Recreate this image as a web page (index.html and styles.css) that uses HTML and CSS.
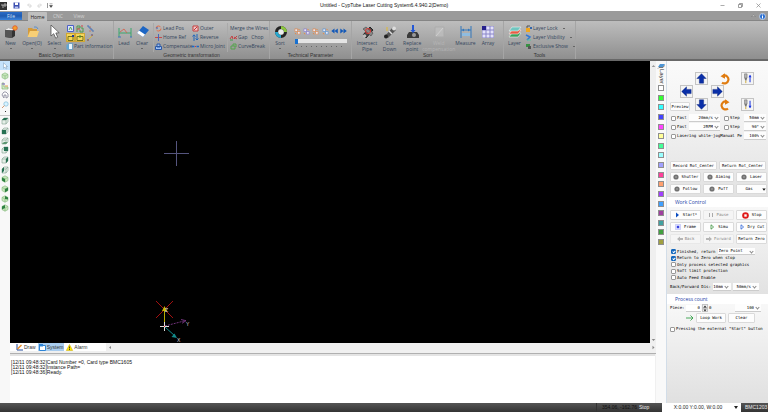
FILE: index.html
```html
<!DOCTYPE html>
<html lang="en">
<head>
<meta charset="utf-8">
<title>Untitled - CypTube Laser Cutting System6.4.940.2(Demo)</title>
<link rel="stylesheet" href="styles.css">
</head>
<body>
<svg class="defs" aria-hidden="true">
  <symbol id="arrow" viewBox="0 0 13 13"><path d="M6.5 .8 12 6.500H9V12H4V6.500H1z" fill="#0a2fa8" stroke="#061f78" stroke-width=".5"/></symbol>
  <symbol id="turn" viewBox="0 0 12 12"><path d="M3 9.6A4 4 0 1 0 4.300 2.600" fill="none" stroke="#e07c10" stroke-width="2.200"/><path d="M1.500 3.200 6 .2V5.800z" fill="#e07c10"/></symbol>
  <symbol id="head" viewBox="0 0 13 13"><path d="M3 1h3v5H3z" fill="#b5b5b5" stroke="#666" stroke-width=".6"/><path d="M3 6h3L5.300 9H3.700z" fill="#777"/><path d="M4.500 9v3" stroke="#c8a020"/><path d="M9.500 3v8" stroke="#1a35e0" stroke-width="1.200"/><path d="M7.700 5 9.500 2l1.800 3z" fill="#1a35e0"/></symbol>
  <symbol id="ball" viewBox="0 0 6 6"><circle cx="3" cy="3" r="2.600" fill="#777"/><circle cx="3" cy="3" r="1.300" fill="#aaa" stroke="#555" stroke-width=".5"/></symbol>
  <symbol id="cube" viewBox="0 0 8 8"><path d="M1 3 3 1h4v3.500L5 7H1z" fill="#e5efe8" stroke="#7fa08e" stroke-width=".6"/><path d="M1 3h4v4M5 3l2-2" fill="none" stroke="#7fa08e" stroke-width=".6"/></symbol>
  <symbol id="iso" viewBox="0 0 8 8"><path d="M4 .8 7 2.400v3.200L4 7.200 1 5.600V2.400z" fill="#c9e6bd" stroke="#85b97c" stroke-width=".6"/><path d="M1 2.400 4 4l3-1.600M4 4v3.200" fill="none" stroke="#85b97c" stroke-width=".6"/></symbol>
  <symbol id="dots" viewBox="0 0 8 8"><path d="M1 1h3v3H1zM4 4h3v3H4z" fill="#e8e8f4" stroke="currentColor" stroke-width=".8"/><path d="M5 1l1.500 1.500M1 6l1.500 1" stroke="#f08030"/></symbol>
</svg>
<div class="app">
  <header class="title">
    <div class="quick">
      <svg width="8" height="8"><path d="M0 0h7v8H0z" fill="#333"/><path d="M1 3h2v3M4 2h2v2H4z" stroke="#ddd" stroke-width=".7" fill="none"/></svg>
      <button class="bare" aria-label="Save"><svg width="7" height="7"><path d="M.5.500h6v6h-6z" fill="#3c4fb0"/><path d="M2 .5h3v2.500H2z" fill="#fff"/><path d="M1.800 4.500h3.400v2H1.800z" fill="#b9c3ec"/></svg></button>
      <button class="bare" aria-label="Undo"><svg width="5" height="5"><path d="M1 2h3v2H2M2 .5.500 2 2 3.500" fill="none" stroke="#ccc" stroke-width=".7"/></svg></button>
      <button class="bare" aria-label="Redo"><svg width="5" height="5"><path d="M4 2H1v2h2M3 .5 4.500 2 3 3.500" fill="none" stroke="#ccc" stroke-width=".7"/></svg></button>
      <button class="bare more" aria-label="Customize"><svg width="4" height="5"><path d="M.5.800h3M.5 2.500h3L2 4.500z" fill="#333" stroke="#333" stroke-width=".4"/></svg></button>
    </div>
    <h1>Untitled - CypTube Laser Cutting System6.4.940.2(Demo)</h1>
    <div class="win">
      <button class="bare" aria-label="Minimize"><svg width="5" height="5"><path d="M.5 2.500h4" stroke="#888" stroke-width=".7"/></svg></button>
      <button class="bare" aria-label="Restore"><svg width="5" height="5"><path d="M.5 1.500h3v3h-3zM1.500 1.500v-1h3v3h-1" fill="none" stroke="#777" stroke-width=".7"/></svg></button>
      <button class="bare" aria-label="Close"><svg width="5" height="5"><path d="m.5.500 4 4m0-4-4 4" stroke="#888" stroke-width=".7"/></svg></button>
    </div>
  </header>
  <nav class="tabs">
    <button class="file">File</button><button class="on">Home</button><button>CNC</button><button>View</button>
    <div class="tabend">
      <button class="bare" aria-label="Collapse ribbon"><svg width="5" height="4"><path d="M.5 2.500 2.500 1l2 1.500z" fill="#ddd" stroke="#666" stroke-width=".4"/></svg></button>
      <button class="bare" aria-label="Help"><svg width="7" height="7"><circle cx="3.500" cy="3.500" r="3" fill="#2b6fd0" stroke="#dce8fa" stroke-width=".7"/><path d="M3.500 1.500v1M3.500 3v2.500" stroke="#fff"/></svg></button>
    </div>
  </nav>
  <div class="ribbon">
    <section class="group g1">
      <div class="tools">
        <button class="big drop"><svg width="14" height="14"><path d="m1 5 3-2 7 1v7l-3 2-7-1z" fill="#333"/><path d="m1 5 3-2 7 1-3 1.500z" fill="#eee"/><path d="m1 5 7 .5V13l-7-1z" fill="#555"/><circle cx="11" cy="3" r="2.300" fill="#f3a02c" stroke="#e2562c" stroke-width=".8"/></svg>New</button>
        <button class="big drop"><svg width="14" height="14"><path d="M2 3h4l1 1h4v7H2z" fill="#d49a3a"/><path d="M1.500 12 4 6h9l-2 6z" fill="#f8cf76"/><path d="M8 2q3-1 4 2" fill="none" stroke="#5b8ecb"/></svg>Open(O)</button>
        <button class="big drop"><svg width="14" height="14"><path d="M3 0v11l2.700-2.300 2 4.500 2-1L7.800 8l3.400-.2z" fill="#fff" stroke="#444" stroke-width=".7"/></svg>Select</button>
        <div class="cluster">
          <button class="bare" aria-label="Fit"><svg width="8" height="8"><path d="M.5.500h6v6h-6z" fill="#dfe6fa" stroke="#4b60c8"/><path d="m2 5 1.500-3L5 5" stroke="#53a052" fill="none"/></svg></button>
          <button class="bare" aria-label="Swap"><svg width="8" height="8"><path d="M1 7V1h3v2H2m3 0h2v4H4V5" stroke="#4c9c4c" fill="none"/><path d="M5 1h2M1 4h3" stroke="#d04545"/></svg></button>
          <button class="bare" aria-label="Nodes"><svg width="8" height="8"><path d="M1 1h2v2h2v2h2v2" stroke="#4972b8" fill="none"/><path d="M4 2h1M3 6h2" stroke="#b76"/></svg></button>
          <button class="bare lit" aria-label="Start point"><svg width="8" height="8"><path d="M1 2.500h5v4H1z" fill="none" stroke="#75701a"/><path d="M5 1h2v2H5z" fill="#223a9c"/></svg></button>
          <button class="bare lit" aria-label="Path"><svg width="8" height="8"><path d="M1 2.500h6v4H1z" fill="none" stroke="#75701a"/><path d="M4 1v3" stroke="#3a9838"/></svg></button>
          <button class="bare" aria-label="Line"><svg width="8" height="8"><path d="m1 7 6-6" stroke="#d6b040"/><path d="M1 6h2M5 1h2" stroke="#647"/></svg></button>
          <button class="small info"><svg width="7" height="8"><path d="M.5 1.500h4v5h-4z" fill="#5ea7d8"/><path d="M2.500.500h4v6h-4z" fill="#e9f6ff" stroke="#4e91bd" stroke-width=".7"/></svg>Part information</button>
        </div>
      </div>
      <h2>Basic Operation</h2>
    </section>
    <section class="group g2">
      <div class="tools">
        <button class="big"><svg width="14" height="14"><path d="M1 3v9M13 3v9M1 8h12" stroke="#3ba66c" fill="none"/><path d="m2 7 4-3 3 4" stroke="#d65d46" fill="none" stroke-width=".8"/><path d="M0 12h3M12 12h2" stroke="#4472c0"/></svg>Lead</button>
        <button class="big drop"><svg width="14" height="14"><path d="m7 1 6 4-6 7-6-4z" fill="#1d66c4"/><path d="m1 8 2-2.500 6 4L7 12z" fill="#fff"/></svg>Clear</button>
        <div class="list line">
          <button class="small"><svg width="7" height="7"><circle cx="3.500" cy="3.500" r="2.500" fill="none" stroke="#e66b43" stroke-dasharray="6 2"/><path d="M1 3h2" stroke="#3c61b8"/></svg>Lead Pos</button>
          <button class="small"><svg width="7" height="7"><path d="M0 3.500h7" stroke="#c54b4b"/><path d="M3.500 0v7" stroke="#4966bd"/></svg>Home Ref</button>
          <button class="small"><svg width="7" height="7"><path d="M.5 3.500h6v3h-6zM2 1h3v3H2z" fill="#9ec0f2" stroke="#2b58a6"/></svg>Compensate</button>
        </div>
        <div class="list rightline">
          <button class="small"><svg width="7" height="7"><path d="M1 1h5v5H1z" fill="#edcaca" stroke="#c43e3e"/><path d="m2 5 3-3" stroke="#c33"/></svg>Outer</button>
          <button class="small"><svg width="7" height="7"><path d="M2 7V1M.5 2.500 2 .8l1.500 1.700M5 0v6M3.500 4.500 5 6l1.500-1.500" fill="none" stroke="#2167bb"/></svg>Reverse</button>
          <button class="small"><svg width="7" height="7"><path d="M0 3.500h2.500M4.500 3.500H7" stroke="#1e68c6" stroke-width="1.500"/><path d="M3 3.500h1" stroke="#d33"/></svg>Micro Joint</button>
        </div>
        <div class="list">
          <button class="small">Merge the Wires</button>
          <button class="small"><svg width="7" height="7"><path d="m0 5 2-3 1 3M4 3l3 2M4 5l3-3" fill="none" stroke="#c24141"/><path d="M0 6h3" stroke="#3c9d49"/></svg>Gap&nbsp;&nbsp; Chop</button>
          <button class="small"><svg width="7" height="7"><path d="M1 3h4v3H1zM3 3V1h3v3" fill="none" stroke="#55a34d"/></svg>CurveBreak</button>
        </div>
      </div>
      <h2>Geometric transformation</h2>
    </section>
    <section class="group g3">
      <div class="tools">
        <button class="big drop"><svg width="14" height="14"><circle cx="7" cy="7" r="4.500" fill="none" stroke="#252525" stroke-width="3"/><path d="M7 2.500a4.500 4.500 0 0 1 4.500 4.500" fill="none" stroke="#8cc63f" stroke-width="3"/><path d="M7 11.500A4.500 4.500 0 0 1 2.500 7" fill="none" stroke="#27a8d0" stroke-width="3"/><circle cx="7" cy="7" r="2.500" fill="#eee"/></svg>Sort</button>
        <div class="tech">
          <div class="techrow">
            <button class="bare c1" aria-label="Order 1"><svg width="7" height="7"><use href="#dots"/></svg></button>
            <button class="bare c2" aria-label="Order 2"><svg width="7" height="7"><use href="#dots"/></svg></button>
            <button class="bare c3" aria-label="Order 3"><svg width="7" height="7"><use href="#dots"/></svg></button>
            <button class="bare c4" aria-label="Order 4"><svg width="7" height="7"><use href="#dots"/></svg></button>
            <button class="bare" aria-label="Previous"><svg width="7" height="6"><path d="M3.500.500v5L.3 3zM6.800.500v5L3.500 3z" fill="#1258b8"/></svg></button>
            <button class="bare" aria-label="Next"><svg width="7" height="6"><path d="M.3.500v5L3.500 3zM3.500.500v5L6.800 3z" fill="#1258b8"/></svg></button>
          </div>
          <input type="range" min="0" max="10" value="0" aria-label="Sequence">
          <div class="ticks"></div>
        </div>
      </div>
      <h2>Technical Parameter</h2>
    </section>
    <section class="group g4">
      <div class="tools">
        <button class="big"><svg width="14" height="14"><path d="m2 10 7-8 3 3-7 8z" fill="#444" stroke="#222"/><path d="m2 4 3-2 7 6-2 3z" fill="#888" stroke="#444" stroke-width=".6"/><circle cx="7" cy="6" r="2.500" fill="none" stroke="#e23b36"/><circle cx="3.500" cy="11" r="1.800" fill="#bbb"/></svg><span>Intersect<br>Pipe</span></button>
        <button class="big"><svg width="14" height="14"><path d="m2 11 8-9 3 3-8 8z" fill="#555"/><path d="m6 6 3 3" stroke="#ddd" stroke-width="1.500"/><circle cx="11" cy="3.500" r="2" fill="#ddd"/><circle cx="3" cy="11.500" r="2" fill="#222"/><path d="M4 2v4" stroke="#e2ba30"/></svg><span>Cut<br>Down</span></button>
        <button class="big"><svg width="14" height="14"><path d="m1 10 2-3h8l2 3v3H1z" fill="#3a3a3a"/><circle cx="8" cy="10" r="2" fill="#999"/><path d="M7 0v5" stroke="#2458d6" stroke-width="2"/><path d="M4.500 5h5L7 8z" fill="#2458d6"/></svg><span>Replace<br>point</span></button>
        <button class="big dim" disabled><svg width="14" height="14"><path d="M3 2h9v10H3z" fill="#c0c0c0" stroke="#aaa"/><path d="m4 11 7-8" stroke="#ddd"/></svg><span>Weld<br>compensation</span></button>
        <button class="big"><svg width="14" height="14"><path d="M2 1v12M12 1v12M2 5h10" stroke="#3378bd"/><path d="M3 8h8v3H3z" fill="#8fbce0"/><path d="m3 5 2-1.500v3zM11 5 9 3.500v3z" fill="#3378bd"/></svg><span>Measure</span></button>
        <button class="big"><svg width="14" height="14"><path d="M1 1h12v12H1z" fill="#8a86c8"/><path d="M5.500 1.500h3v3h-3zM9.500 1.500h3v3h-3zM1.500 5.500h3v3h-3zM5.500 5.500h3v3h-3zM9.500 5.500h3v3h-3zM1.500 9.500h3v3h-3zM5.500 9.500h3v3h-3zM9.500 9.500h3v3h-3z" fill="#e4e2fa"/><path d="M1 1h4v4H1z" fill="#26208c"/></svg><span>Array</span></button>
      </div>
      <h2>Sort</h2>
    </section>
    <section class="group g5">
      <div class="tools">
        <button class="big"><svg width="14" height="14"><path d="m1 12 3-4h9l-3 4z" fill="#3aa05c" stroke="#fff" stroke-width=".5"/><path d="m1 9 3-4h9l-3 4z" fill="#e65d45" stroke="#fff" stroke-width=".5"/><path d="m1 6 3-4h9l-3 4z" fill="#71c6c0" stroke="#fff" stroke-width=".5"/></svg>Layer</button>
        <div class="list">
          <button class="small"><svg width="7" height="7"><path d="M1 3h4v4H1z" fill="#f2a71d"/><path d="M2 3V1h3" fill="none" stroke="#555"/><path d="M5 2h2v2H5z" fill="#36a"/></svg>Layer Lock<i></i></button>
          <button class="small"><svg width="7" height="7"><path d="m1 1 4 2-3 3" fill="none" stroke="#3278d4" stroke-width="1.500"/><path d="M2 6h4" stroke="#53c8a0"/></svg>Layer Visbility<i></i></button>
          <button class="small"><svg width="7" height="7"><path d="M1 1h4v3H1z" fill="#389144"/><path d="M3 3h3v3H3z" fill="#555"/></svg>Exclusive Show<i></i></button>
        </div>
      </div>
      <h2>Tools</h2>
    </section>
  </div>
  <main class="work">
    <nav class="side" aria-label="View tools">
      <button class="on" aria-label="Pointer"><svg width="8" height="8"><path d="M2.500.800v5.500L4 5l1 2 1-.5-1-2h1.500z" fill="#fff" stroke="#7797b5" stroke-width=".5"/></svg></button>
      <button aria-label="Orbit"><svg width="8" height="8"><use href="#iso"/></svg></button>
      <button aria-label="Edit"><svg width="8" height="8"><path d="M1 1v6h6V5H3V1z" fill="#d8edc8" stroke="#72aa61" stroke-width=".6"/><path d="M1 2h3" stroke="#8b6bcf"/><path d="M4 4h3" stroke="#e6a04f"/></svg></button>
      <button aria-label="Pan"><svg width="8" height="8"><path d="M1 4 2 2l1-1h2l2 2v3L5 7V4H3v3z" fill="#fff" stroke="#808095" stroke-width=".8"/></svg></button>
      <button aria-label="Zoom"><svg width="8" height="8"><circle cx="5" cy="3" r="2.200" fill="#d8f2ff" stroke="#81bbda" stroke-width=".7"/><path d="M3.500 4.500 1 7" stroke="#d49973"/></svg></button>
      <span class="dot"></span>
      <button aria-label="View 1"><svg width="8" height="8"><use href="#cube"/><path d="m1 3 2-2h4L5 3z" fill="#257052"/></svg></button>
      <button aria-label="View 2"><svg width="8" height="8"><use href="#cube"/><path d="M1 3h4v4H1z" fill="#257052"/></svg></button>
      <button aria-label="View 3"><svg width="8" height="8"><use href="#cube"/><path d="m1 7 2-2h4L5 7z" fill="#5b9670"/></svg></button>
      <button aria-label="View 4"><svg width="8" height="8"><use href="#cube"/><path d="M3 1h4v4H3z" fill="#257052"/></svg></button>
      <button aria-label="View 5"><svg width="8" height="8"><use href="#cube"/><path d="m5 3 2-2v4L5 7z" fill="#257052"/></svg></button>
      <button aria-label="View 6"><svg width="8" height="8"><use href="#cube"/><path d="m1 3 2-2v4L1 7z" fill="#257052"/></svg></button>
      <button aria-label="View 7"><svg width="8" height="8"><use href="#iso"/><path d="M1 2.400 4 4v3.200L1 5.600z" fill="#2c8140"/></svg></button>
      <button aria-label="View 8"><svg width="8" height="8"><use href="#iso"/><path d="M7 2.400 4 4v3.200l3-1.600z" fill="#2c8140"/></svg></button>
      <button aria-label="View 9"><svg width="8" height="8"><use href="#iso"/><path d="M4 1 7 2.400v2L4 4z" fill="#2c8140"/></svg></button>
      <button aria-label="View 10"><svg width="8" height="8"><use href="#iso"/><path d="M1 2.400 4 1v3L1 5.600z" fill="#2c8140"/></svg></button>
    </nav>
    <div class="center">
      <div class="stage">
        <svg class="canvas" role="img" aria-label="Drawing area">
          <path d="M154 92.500h25M166.500 80v25" stroke="#55557e"/>
          <path d="m146 240 17 17m0-17-17 17" stroke="#a01010"/>
          <path d="M154.500 266v-18" stroke="#b8a800"/><path d="m152 250 2.500-5 2.500 5z" fill="#c8b400"/>
          <path d="m155 265 19-5" stroke="#8c3f98" stroke-width=".8" stroke-dasharray="2 1"/><path d="m171 258.500 5 1.200-4 2.600" fill="none" stroke="#8c3f98" stroke-width=".8"/>
          <path d="m155 266 10 9" stroke="#128a8a"/><path d="m167 277-5.500-1 3-3.500z" fill="#128a8a"/>
          <path d="M150 265.500h9M154.500 261v9" stroke="#ddd"/><path d="M154 265h1v1h-1z" fill="#e43"/>
          <text x="155" y="251">Z</text><text x="176" y="265">Y</text><text x="167" y="281">X</text>
        </svg>
        <div class="vscroll"><svg width="5" height="4"><path d="M.7 3h3.600L2.500 1z" fill="#999"/></svg><svg width="5" height="4"><path d="M.7 1h3.600L2.500 3z" fill="#888"/></svg></div>
      </div>
      <div class="dock">
        <div class="docktabs">
          <button><svg width="7" height="7"><path d="M1 0v6h6" fill="none" stroke="#234a9c"/><path d="m1.500 5 4-4" stroke="#e88b25" stroke-width="1.500"/></svg>Draw</button>
          <button class="on"><svg width="7" height="7"><path d="M.5 1.500h6v5h-6z" fill="#fff" stroke="#2d84d6"/><path d="M0 0h4v2.500H0z" fill="#2d84d6"/></svg>System</button>
          <button><svg width="7" height="7"><path d="m3.500.500 3.200 6H.3z" fill="#ffe500" stroke="#c4a700" stroke-width=".5"/><path d="M3.500 2.500v2M3.500 5v1" stroke="#222" stroke-width=".8"/></svg>Alarm</button>
        </div>
        <svg width="4" height="5"><path d="M3 1v3L1 2.500z" fill="#888"/></svg>
        <svg class="end" width="5" height="5"><path d="M1.500.800v3.400l2-1.700z" fill="#888"/></svg>
      </div>
      <div class="log">
        <p>[12/11 09:48:32]Card Number =0, Card type BMC1605</p>
        <p>[12/11 09:48:32]Instance Path=</p>
        <p>[12/11 09:48:36]Ready.</p>
      </div>
    </div>
    <aside class="layers">
      <svg width="7" height="6"><path d="m0 4 2-3h5L5 4z" fill="#4d95d5"/><path d="m0 5.500 1-1h4l1.500-2" fill="none" stroke="#777"/></svg>
      <span class="vert">Layer</span>
      <div class="swatches">
        <button aria-label="Layer 0"></button><button aria-label="Layer 1"></button><button aria-label="Layer 2"></button><button aria-label="Layer 3"></button><button aria-label="Layer 4"></button><button aria-label="Layer 5"></button><button aria-label="Layer 6"></button><button aria-label="Layer 7"></button><button aria-label="Layer 8"></button><button aria-label="Layer 9"></button><button aria-label="Layer 10"></button><button aria-label="Layer 11"></button><button aria-label="Layer 12"></button><button aria-label="Layer 13"></button><button aria-label="Layer 14"></button><button aria-label="Layer 15"></button><button aria-label="Layer 16"></button>
      </div>
    </aside>
    <aside class="panel">
      <section class="motion">
        <div class="pad">
          <button class="key up" aria-label="Jog up"><svg width="11" height="11"><use href="#arrow"/></svg></button>
          <button class="key left" aria-label="Jog left"><svg width="11" height="11"><use href="#arrow" transform="rotate(-90 5.500 5.500)"/></svg></button>
          <button class="key right" aria-label="Jog right"><svg width="11" height="11"><use href="#arrow" transform="rotate(90 5.500 5.500)"/></svg></button>
          <button class="key down" aria-label="Jog down"><svg width="11" height="11"><use href="#arrow" transform="rotate(180 5.500 5.500)"/></svg></button>
          <button class="bare ccw" aria-label="Rotate backward"><svg width="12" height="12"><use href="#turn"/></svg></button>
          <button class="bare cw" aria-label="Rotate forward"><svg width="12" height="12"><use href="#turn" transform="matrix(-1 0 0 1 12 0)"/></svg></button>
          <button class="key zup" aria-label="Head up"><svg width="11" height="11"><use href="#head"/></svg></button>
          <button class="key zdown" aria-label="Head down"><svg width="11" height="11" viewBox="0 0 13 13"><path d="M3 1h3v5H3z" fill="#b5b5b5" stroke="#666" stroke-width=".6"/><path d="M3 6h3L5.300 9H3.700z" fill="#777"/><path d="M4.500 9v3" stroke="#c8a020"/><path d="M9.500 2v8" stroke="#1a35e0" stroke-width="1.200"/><path d="M7.700 8 9.500 11l1.800-3z" fill="#1a35e0"/></svg></button>
          <button class="btn preview">Preview</button>
        </div>
        <div class="speed">
          <label><input type="checkbox">Fast</label><span class="sel"><select aria-label="Fast speed"><option>20mm/s</option></select></span><label><input type="checkbox">Step</label><span class="sel"><select aria-label="Step length"><option>50mm</option></select></span>
          <label><input type="checkbox">Fast</label><span class="sel"><select aria-label="Fast rotation"><option>2RPM</option></select></span><label><input type="checkbox">Step</label><span class="sel"><select aria-label="Step angle"><option>90°</option></select></span>
          <label class="laser"><input type="checkbox">Lasering while-jog</label><label class="manual" for="power">Manual Pe</label><span class="sel"><select id="power"><option>100%</option></select></span>
        </div>
        <div class="two"><button class="btn">Record Rot_Center</button><button class="btn">Return Rot_Center</button></div>
        <div class="three">
          <button class="btn"><svg width="6" height="6"><use href="#ball"/></svg>Shutter</button><button class="btn"><svg width="6" height="6"><use href="#ball"/></svg>Aiming</button><button class="btn"><svg width="6" height="6"><use href="#ball"/></svg>Laser</button>
          <button class="btn"><svg width="6" height="6"><use href="#ball"/></svg>Follow</button><button class="btn"><svg width="6" height="6"><use href="#ball"/></svg>Puff</button><button class="btn gas">Gas<svg width="4" height="3"><path d="M.3.500h3.400L2 2.800z" fill="#111"/></svg></button>
        </div>
      </section>
      <section class="control">
        <h2>Work Control</h2>
        <div class="three tall">
          <button class="btn"><svg width="6" height="6"><path d="m2 .5 3 2.500-3 2.500z" fill="#0b4cc0"/></svg>Start*</button>
          <button class="btn off" disabled><svg width="6" height="6"><path d="M1.500 1v4M4.500 1v4" stroke="#aaa"/></svg>Pause</button>
          <button class="btn"><svg width="7" height="7"><circle cx="3.500" cy="3.500" r="3.300" fill="#df1c1c"/><path d="M2.300 2.300h2.400v2.400H2.300z" fill="#fff"/></svg>Stop</button>
          <button class="btn"><svg width="6" height="6"><path d="M.5.500h5v5h-5z" fill="#e4e6ff" stroke="#7a80ef" stroke-width=".6" stroke-dasharray="1"/><path d="M1.800 1.800h2.400v2.400H1.800z" fill="#3540e0"/></svg>Frame</button>
          <button class="btn"><svg width="6" height="6"><path d="m2 .8 2.600 2.200L2 5.200z" fill="#fff" stroke="#37913a" stroke-width=".8"/></svg>Simu</button>
          <button class="btn"><svg width="6" height="6"><path d="m2 .8 2.600 2.200L2 5.200z" fill="#fff" stroke="#2b62d8" stroke-width=".8"/></svg>Dry Cut</button>
          <button class="btn off" disabled><svg width="6" height="6"><path d="M0 3 3 .5v5zM3 2h3v2H3z" fill="#b5b5b5"/></svg>Back</button>
          <button class="btn off" disabled><svg width="6" height="6"><path d="M6 3 3 .5v5zM0 2h3v2H0z" fill="#b5b5b5"/></svg>Forward</button>
          <button class="btn">Return Zero</button>
        </div>
        <div class="checks">
          <div class="row"><label><input type="checkbox" checked>Finished, return</label><span class="sel point"><select aria-label="Return point"><option>Zero Point</option></select></span></div>
          <label><input type="checkbox" checked>Return to Zero when stop</label>
          <label><input type="checkbox">Only process selected graphics</label>
          <label><input type="checkbox">Soft limit protection</label>
          <label><input type="checkbox">Auto Feed Enable</label>
        </div>
        <div class="dist"><label for="dis">Back/Forward Dis:</label><span class="sel"><select id="dis"><option>10mm</option></select></span><span class="sel"><select aria-label="Back and forward speed"><option>50mm/s</option></select></span></div>
      </section>
      <section class="count">
        <h2>Process count</h2>
        <div class="piece"><label for="piece">Piece:</label><input id="piece" type="text" value="0"><span class="spin"><button aria-label="More"><svg width="4" height="3"><path d="M.5 2.500h3L2 .5z" fill="#222"/></svg></button><button aria-label="Less"><svg width="4" height="3"><path d="M.5.500h3L2 2.500z" fill="#222"/></svg></button></span><span>0</span><span class="sel"><select aria-label="Total"><option>100</option></select></span></div>
        <div class="loop"><svg width="8" height="6"><path d="M0 3h7M4.500.500 7 3 4.500 5.500" fill="none" stroke="#35a04a" stroke-width=".9"/></svg><button class="btn">Loop Work</button><button class="btn">Clear</button></div>
        <label><input type="checkbox">Pressing the external "Start" button</label>
      </section>
    </aside>
  </main>
  <footer class="status">
    <span class="coords">354.06, -162.76</span><span class="state">Stop</span>
    <span class="pos"><select aria-label="Position"><option>X:0.00 Y:0.00, W:0.00</option></select></span>
    <span class="card">BMC1203</span>
  </footer>
</div>
</body>
</html>
```
FILE: styles.css
```css
* { box-sizing: border-box; margin: 0; padding: 0; }
body { font: 5px/7px "Liberation Sans", sans-serif; color: #333; }
button, select, input { font: inherit; color: inherit; border: 0; background: none; border-radius: 0; }
svg { display: block; flex: none; overflow: visible; }
h1, h2 { font-size: 5px; font-weight: 400; }
.defs { position: absolute; width: 0; height: 0; }
.app { display: flex; flex-direction: column; min-height: 100vh; overflow: hidden; }
.bare { display: flex; align-items: center; justify-content: center; }

/* Title bar */
.title { display: grid; grid-template-columns: 1fr auto 1fr; align-items: center; height: 11px; background: #fff; }
.title h1 { color: #111; }
.quick { display: flex; align-items: center; gap: 5px; }
.quick .bare:nth-child(3) { margin-left: 2px; }
.more { border-left: 1px solid #999; padding-left: 1px; }
.win { display: flex; justify-content: flex-end; gap: 13px; padding-right: 7px; }

/* Ribbon */
.tabs, .ribbon { font-family: "Open Sans", "Liberation Sans", sans-serif; }
.tabs { display: flex; height: 10px; background: #9a9a9a; border-bottom: 1px solid #858585; padding-top: 1px; color: #d2d2d2; }
.tabs > button { width: 20px; margin-right: 1px; }
.tabs .file { width: 22px; margin-right: 6px; background: linear-gradient(#2a6cc8, #1f5bb0 50%, #3a83dc); color: #cfe0f8; }
.tabs .on { width: 19px; background: #bfbfbf; color: #222; height: 10px; border-radius: 1px 1px 0 0; }
.tabend { margin-left: auto; display: flex; align-items: center; gap: 3px; padding-right: 2px; }
.ribbon { display: flex; height: 40px; background: linear-gradient(#bdbdbd, #8f8f8f); border-bottom: 2px solid #686868; color: #34465c; }
.group { border-right: 1px solid #a5a5a5; padding-top: 2px; }
.group h2 { text-align: center; color: #333; line-height: 7px; font-family: "Liberation Sans", sans-serif; }
.tools { display: flex; height: 29px; }
.g1 { width: 114px; }
.g2 { width: 156px; }
.g3 { width: 82px; }
.g4 { width: 152px; }
.g5 { width: 72px; }
.big { display: flex; flex-direction: column; align-items: center; justify-content: flex-start; line-height: 6px; padding-top: 2px; gap: 2px; height: 29px; text-align: center; }
.big svg { width: 13px; height: 13px; }
.drop::after { content: ""; width: 2px; height: 1px; background: #666; }
.g1 .big { width: 21px; }
.g1 .big:nth-child(2) { width: 22px; }
.g1 .big:nth-child(3) { width: 23px; }
.cluster { display: grid; grid-template-columns: 9px 10px 9px; grid-auto-rows: 9px; padding-top: 1px; align-items: center; }
.lit { background: #f4d65c; outline: 1px solid #d0a733; outline-offset: -1px; height: 9px; }
.info { grid-column: 1 / 4; }
.small { display: flex; align-items: center; gap: 1px; height: 9px; white-space: nowrap; }
.small i { width: 2px; height: 1px; background: #666; margin-left: 4px; }
.list { display: flex; flex-direction: column; padding-top: 1px; }
.g2 .big { width: 18px; }
.g2 .big:first-child { margin-left: 1px; }
.g2 .line { width: 39px; margin-left: 2px; padding-left: 1px; border-left: 1px solid #aaa; }
.g2 .rightline { width: 36px; margin-right: 2px; border-right: 1px solid #aaa; }
.g3 .big { width: 20px; }
.tech { width: 56px; padding-top: 4px; margin-left: 3px; }
.techrow { display: flex; justify-content: space-between; padding-left: 1px; padding-right: 2px; height: 8px; }
.c1, .c3 { color: #e08a50; }
.c2 { color: #8b7fd0; }
.c4 { color: #5b95d5; }
.tech input { display: block; appearance: none; width: 52px; height: 4px; background: #e4e4e4; margin: 4px 0 3px 2px; }
.tech input::-webkit-slider-thumb { appearance: none; width: 3px; height: 5px; background: #1770d0; }
.ticks { height: 1px; margin-left: 3px; width: 50px; background: repeating-linear-gradient(90deg, #666 0 1px, transparent 1px 5px); }
.g4 .tools { justify-content: space-between; padding: 0 4px; }
.g4 .big { width: 22px; }
.g4 .big.dim { width: 30px; color: #b6b6b6; }
.dim svg { opacity: .7; }
.g5 .big { width: 22px; }

/* Work area */
.work { flex: 1; display: grid; grid-template-columns: 10px minmax(0, 1fr) 11px 101px; }
.side { background: #f8f8f8; display: flex; flex-direction: column; }
.side button { height: 9px; margin-bottom: 1px; display: flex; align-items: center; justify-content: center; }
.side button:nth-child(3n) { margin-bottom: 0; }
.side .on { background: #c5e2fb; }
.dot { height: 6px; border-bottom: 1px solid #c8c8c8; }
.dot::before { content: ""; display: block; width: 1px; height: 1px; background: #333; margin: 1px auto; }
.center { display: flex; flex-direction: column; background: #f0f0f0; }
.stage { display: flex; flex: 1; }
.canvas { flex: 1; background: #000; overflow: hidden; }
.canvas text { fill: #ddd; font: 5px "Liberation Sans", sans-serif; }
.vscroll { width: 6px; display: flex; flex-direction: column; justify-content: space-between; align-items: center; padding: 3px 0 1px; background: #efefef; }
.dock { display: flex; align-items: center; height: 11px; padding-bottom: 2px; border-bottom: 1px solid #b0b0b0; }
.docktabs { display: flex; background: #fff; width: 96px; height: 8px; padding-left: 5px; gap: 1px; margin-right: 2px; }
.docktabs button { display: flex; align-items: center; gap: 1px; padding: 0 1px; }
.docktabs .on { background: #a9cdef; }
.end { margin-left: auto; }
.log { height: 49px; margin: 0 1px 0 0; border-top: 2px solid #e4e4e4; background: #fff; padding: 4px 1px; line-height: 5px; color: #111; }
.layers { background: #f9f9f9; border-right: 1px solid #d2dde8; display: flex; flex-direction: column; align-items: center; padding-top: 2px; }
.vert { writing-mode: vertical-rl; font-size: 6px; line-height: 7px; height: 16px; }
.swatches { display: flex; flex-direction: column; justify-content: space-between; height: 160px; }
.swatches button { width: 6px; height: 6px; border: 1px solid #8f8f8f; background: #fff; }
.swatches :nth-child(2) { background: #3f3; }
.swatches :nth-child(3) { background: #3ff; }
.swatches :nth-child(4) { background: #44f; }
.swatches :nth-child(5) { background: #f4f; }
.swatches :nth-child(6) { background: #ff9; }
.swatches :nth-child(7) { background: #4f9; }
.swatches :nth-child(8) { background: #9ff; }
.swatches :nth-child(9) { background: #a0a0ff; }
.swatches :nth-child(10) { background: #ff409c; }
.swatches :nth-child(11) { background: #ffa070; }
.swatches :nth-child(12) { background: #a040ff; }
.swatches :nth-child(13) { background: #40a0ff; }
.swatches :nth-child(14) { background: #a040a0; }
.swatches :nth-child(15) { background: #40a0a0; }
.swatches :nth-child(16) { background: #40a040; }
.swatches :nth-child(17) { background: #a0a040; }

/* Control panel */
.panel { display: flex; flex-direction: column; font: 4px/6px "DejaVu Sans Mono", "Liberation Mono", monospace; color: #000; }
.panel section { padding: 0 1px 0 3px; }
.panel h2 { font: 5px/10px "Open Sans", sans-serif; color: #2543a8; background: #fff; margin: 0 -1px 0 -3px; padding-left: 8px; }
.motion { height: 135px; background: linear-gradient(#fafafa, #f3f3f3 40%, #e2e2e2); display: flex; flex-direction: column; }
.pad { display: grid; grid-template-columns: 10px 13px 2px 13px 3px 7px 6px 7px 10px 13px; grid-template-rows: 13px 13px 13px; padding-top: 11px; }
.key { display: flex; align-items: center; justify-content: center; border: 1px solid #c4c4c4; background: #f4f4f4; }
.up { grid-area: 1 / 4; }
.left { grid-area: 2 / 2; }
.right { grid-area: 2 / 6 / 3 / 8; }
.down { grid-area: 3 / 4; }
.ccw { grid-area: 1 / 7 / 2 / 9; }
.cw { grid-area: 3 / 7 / 4 / 9; }
.zup { grid-area: 1 / 10; }
.zdown { grid-area: 3 / 10; }
.preview { grid-area: 3 / 1 / 4 / 3; align-self: end; width: 20px; height: 9px; }
.btn { display: flex; align-items: center; justify-content: center; gap: 3px; background: #fdfdfd; border: 1px solid #dadada; border-radius: 1px; white-space: nowrap; }
.btn.off { color: #888; background: #f5f5f5; border-color: #e8e8e8; gap: 2px; }
label { display: flex; align-items: center; gap: 1px; white-space: nowrap; }
input[type="checkbox"] { appearance: none; flex: none; width: 5px; height: 5px; border: 1px solid #999; border-radius: 1px; background: #fff; }
input[type="checkbox"]:checked { background: #1368bd; border-color: #1368bd; }
input[type="checkbox"]:checked::after { content: ""; display: block; width: 1px; height: 2px; margin-left: 1px; border: solid #fff; border-width: 0 1px 1px 0; transform: rotate(45deg); }
.sel { display: flex; align-items: center; background: #fdfdfd; border-bottom: 1px solid #ccc; height: 8px; padding-right: 2px; }
.sel select { appearance: none; flex: 1; min-width: 0; text-align: right; text-align-last: right; padding-right: 2px; }
.sel::after { content: ""; width: 2px; height: 2px; border: solid #888; border-width: 0 1px 1px 0; transform: rotate(45deg); }
.speed { display: grid; grid-template-columns: 16px 31px 20px 22px; grid-auto-rows: 8px; gap: 1px 2px; padding: 3px 0 0 1px; }
.speed label:nth-of-type(2n) { padding-left: 2px; }
.laser { grid-column: 1 / 3; }
.speed .manual { padding: 0; justify-content: flex-end; }
.two { display: grid; grid-template-columns: 47px 47px; gap: 2px; margin-top: auto; }
.two .btn { height: 9px; }
.three { display: grid; grid-template-columns: repeat(3, 1fr); gap: 2px; grid-auto-rows: 10px; padding: 2px 0; }
.tall { padding: 3px 0 0; }
.btn.gas { padding-left: 8px; gap: 9px; }
.control { height: 98px; background: linear-gradient(#fafafa, #e2e2e2); border-top: 1px solid #ddd; }
.checks { display: grid; grid-template-rows: repeat(5, 1fr); height: 33px; margin-top: 4px; padding-left: 1px; align-items: center; }
.row { display: flex; align-items: center; gap: 2px; }
.point { width: 37px; height: 7px; }
.point select { text-align: left; text-align-last: left; padding-left: 1px; }
.dist { display: grid; grid-template-columns: 41px 18px 26px; gap: 2px; align-items: center; margin-top: 2px; }
.dist .sel { padding-right: 3px; }
.count { flex: 1; display: flex; flex-direction: column; background: linear-gradient(#fafafa, #e0e0e0); }
.piece { display: grid; grid-template-columns: 15px 15px 6px 25px 26px; gap: 1px; align-items: center; height: 8px; }
.piece input { width: 100%; text-align: right; background: #fff; border-bottom: 1px solid #ccc; padding-right: 1px; }
.spin { display: grid; }
.spin button { display: grid; place-items: center; height: 4px; border: 1px solid #c4c4c4; background: #eee; }
.loop { display: grid; grid-template-columns: 8px 30px 27px; gap: 2px; padding: 1px 0 2px 16px; align-items: center; }
.loop .btn { height: 10px; }
.count > label { height: 8px; }

/* Status bar */
.status { display: flex; height: 9px; line-height: 9px; background: linear-gradient(#555, #333); color: #e8e8e8; justify-content: flex-end; }
.coords { color: #111; border-left: 1px solid #333; padding-left: 5px; width: 43px; }
.state { width: 23px; }
.pos { display: flex; align-items: center; width: 79px; background: #fff; color: #222; padding-right: 3px; }
.pos select { appearance: none; flex: 1; text-align: center; text-align-last: center; }
.pos::after { content: ""; border: solid transparent; border-width: 3px 2px 0; border-top-color: #222; }
.card { width: 27px; padding-left: 4px; }
```
